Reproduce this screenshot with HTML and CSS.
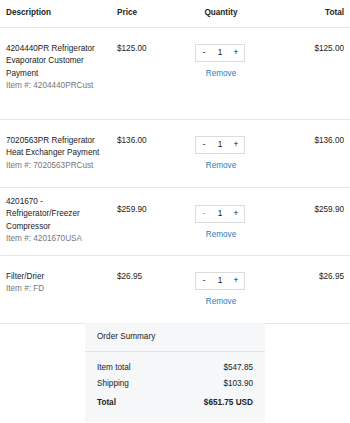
FILE: index.html
```html
<!DOCTYPE html>
<html lang="en">
  <head>
    <meta charset="UTF-8" />
    <meta name="viewport" content="width=device-width, initial-scale=1.0" />
    <title>Cart</title>
    <link rel="stylesheet" href="styles.css">
  </head>
  <body>
    <div class="cart">
      <div class="cart-head">
        <div>Description</div>
        <div>Price</div>
        <div class="center">Quantity</div>
        <div class="right">Total</div>
      </div>

      <div class="cart-row first">
        <div class="desc">
          4204440PR Refrigerator Evaporator Customer Payment
          <div class="sku">Item #: 4204440PRCust</div>
        </div>
        <div>$125.00</div>
        <div class="qty-cell">
          <div class="qty"><span>-</span><span>1</span><span>+</span></div>
          <a class="remove">Remove</a>
        </div>
        <div class="right">$125.00</div>
      </div>

      <div class="cart-row">
        <div class="desc">
          7020563PR Refrigerator Heat Exchanger Payment
          <div class="sku">Item #: 7020563PRCust</div>
        </div>
        <div>$136.00</div>
        <div class="qty-cell">
          <div class="qty"><span>-</span><span>1</span><span>+</span></div>
          <a class="remove">Remove</a>
        </div>
        <div class="right">$136.00</div>
      </div>

      <div class="cart-row shift">
        <div class="desc">
          4201670 - Refrigerator/Freezer Compressor
          <div class="sku">Item #: 4201670USA</div>
        </div>
        <div>$259.90</div>
        <div class="qty-cell">
          <div class="qty"><span class="dim">-</span><span>1</span><span>+</span></div>
          <a class="remove">Remove</a>
        </div>
        <div class="right">$259.90</div>
      </div>

      <div class="cart-row">
        <div class="desc">
          Filter/Drier
          <div class="sku">Item #: FD</div>
        </div>
        <div>$26.95</div>
        <div class="qty-cell">
          <div class="qty"><span>-</span><span>1</span><span>+</span></div>
          <a class="remove">Remove</a>
        </div>
        <div class="right">$26.95</div>
      </div>
    </div>

    <div class="summary">
      <div class="summary-head">Order Summary</div>
      <div class="summary-body">
        <div class="line"><span>Item total</span><span>$547.85</span></div>
        <div class="line"><span>Shipping</span><span>$103.90</span></div>
        <div class="line total"><span>Total</span><span>$651.75 USD</span></div>
      </div>
    </div>
  </body>
</html>
```

FILE: styles.css
```css
body {
  font-family: "Liberation Sans", Arial, sans-serif;
  font-size: 8.2px;
  line-height: 12.3px;
  color: #222;
  margin: 0;
  background: #fff;
}
.cart-head,
.cart-row {
  display: grid;
  grid-template-columns: 111px 73px 62px 1fr;
  padding: 0 6px;
  border-bottom: 1px solid #e6e6e6;
}
.cart-head {
  height: 20px;
  padding-top: 7px;
  font-weight: bold;
}
.center {
  text-align: center;
}
.right {
  text-align: right;
}
.cart-row {
  padding-top: 15px;
  min-height: 52px;
}
.cart-row.first {
  min-height: 76px;
}
.cart-row.shift {
  padding-top: 16px;
  min-height: 51px;
}
.shift .desc {
  margin-top: -8px;
}
.desc {
  padding-right: 8px;
}
.sku {
  color: #777;
}
.qty-cell {
  display: flex;
  flex-direction: column;
  align-items: center;
  padding-top: 1px;
}
.qty {
  display: flex;
  width: 48px;
  height: 16px;
  border: 1px solid #dcdcdc;
  align-items: center;
  margin-left: -2px;
}
.qty span {
  width: 16px;
  text-align: center;
  color: #111;
}
.qty span.dim {
  color: #888;
}
.remove {
  margin-top: 6px;
  color: #2a7cc4;
  cursor: pointer;
}
.summary {
  width: 180px;
  margin: -1px auto 0;
  background: #f6f7f9;
}
.summary-head {
  padding: 8px 12px;
  border-bottom: 1px solid #e2e3e6;
}
.summary-body {
  padding: 10px 12px 13px;
}
.line {
  display: flex;
  justify-content: space-between;
  margin-bottom: 3.7px;
}
.line.total {
  margin-top: 6px;
  margin-bottom: 0;
  font-weight: bold;
}
```
